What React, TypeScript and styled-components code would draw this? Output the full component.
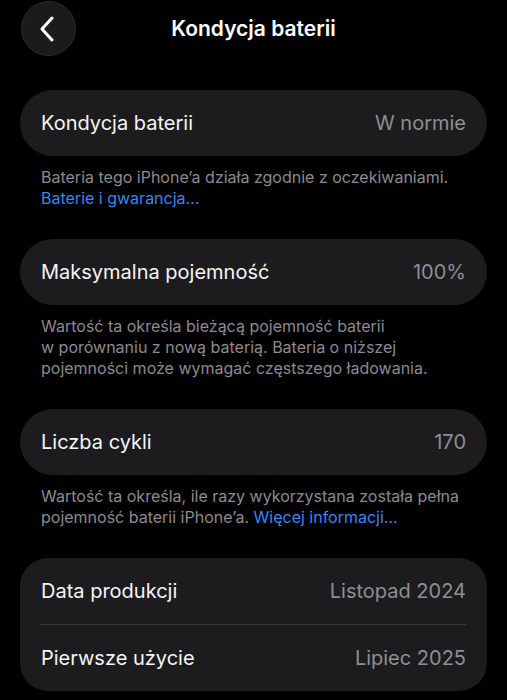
import styled, { createGlobalStyle } from 'styled-components';

const GlobalStyle = createGlobalStyle`
    html, body {
        margin: 0;
        padding: 0;
        background: #000;
    }
    body {
        font-family: Inter, 'Noto Sans', 'Liberation Sans', sans-serif;
        -webkit-font-smoothing: antialiased;
    }
`;

const Page = styled.div`
    width: 507px;
    height: 700px;
    overflow: hidden;
    background: #000;
    color: #fff;
    padding: 1px 20px 0;
    box-sizing: border-box;
`;

//Header
const Header = styled.header`
    position: relative;
    height: 55px;
    display: flex;
    align-items: center;
    justify-content: center;
    margin-bottom: 34px;
`;

const BackBtn = styled.button`
    position: absolute;
    left: 1px;
    top: 0;
    width: 55px;
    height: 55px;
    border-radius: 50%;
    background: #1b1b1c;
    border: 1px solid #2b2b2d;
    display: flex;
    align-items: center;
    justify-content: center;
    padding: 0 3px 0 0;
    cursor: pointer;
`;

const Title = styled.h1`
    margin: 0;
    font-size: 21px;
    font-weight: 600;
`;

//Cards
const Card = styled.div<{ $rounded?: boolean }>`
    background: #1c1c1e;
    border-radius: ${(p) => (p.$rounded ? '28px' : '34px')};
    padding: 0 21px;
`;

const Row = styled.div<{ $divider?: boolean }>`
    height: 66px;
    display: flex;
    align-items: center;
    justify-content: space-between;
    font-size: 20px;
    border-top: ${(p) => (p.$divider ? '1px solid #38383a' : 'none')};
`;

const Label = styled.span`
    color: #f5f5f5;
`;

const Value = styled.span`
    color: #8e8e93;
`;

const Footer = styled.p<{ $last?: boolean }>`
    margin: 11px 21px ${(p) => (p.$last ? '30px' : '30px')};
    font-size: 16px;
    line-height: 21px;
    color: #8b8b90;
`;

const Link = styled.a`
    color: #3f84f5;
    text-decoration: none;
`;

function App() {
    return (
        <>
            <GlobalStyle />
            <Page>
                <Header>
                    <BackBtn>
                        <svg width="16" height="26" viewBox="0 0 16 26" fill="none">
                            <path d="M13 2 L3 13 L13 24" stroke="#fff" strokeWidth="3" strokeLinecap="round" strokeLinejoin="round" />
                        </svg>
                    </BackBtn>
                    <Title>Kondycja baterii</Title>
                </Header>

                <Card>
                    <Row>
                        <Label>Kondycja baterii</Label>
                        <Value>W normie</Value>
                    </Row>
                </Card>
                <Footer>
                    Bateria tego iPhone’a działa zgodnie z oczekiwaniami.
                    <br />
                    <Link>Baterie i gwarancja…</Link>
                </Footer>

                <Card>
                    <Row>
                        <Label>Maksymalna pojemność</Label>
                        <Value>100%</Value>
                    </Row>
                </Card>
                <Footer>
                    Wartość ta określa bieżącą pojemność baterii
                    <br />
                    w porównaniu z nową baterią. Bateria o niższej
                    <br />
                    pojemności może wymagać częstszego ładowania.
                </Footer>

                <Card>
                    <Row>
                        <Label>Liczba cykli</Label>
                        <Value>170</Value>
                    </Row>
                </Card>
                <Footer $last>
                    Wartość ta określa, ile razy wykorzystana została pełna
                    <br />
                    pojemność baterii iPhone’a. <Link>Więcej informacji…</Link>
                </Footer>

                <Card $rounded>
                    <Row>
                        <Label>Data produkcji</Label>
                        <Value>Listopad 2024</Value>
                    </Row>
                    <Row $divider>
                        <Label>Pierwsze użycie</Label>
                        <Value>Lipiec 2025</Value>
                    </Row>
                </Card>
            </Page>
        </>
    );
}

export default App;
